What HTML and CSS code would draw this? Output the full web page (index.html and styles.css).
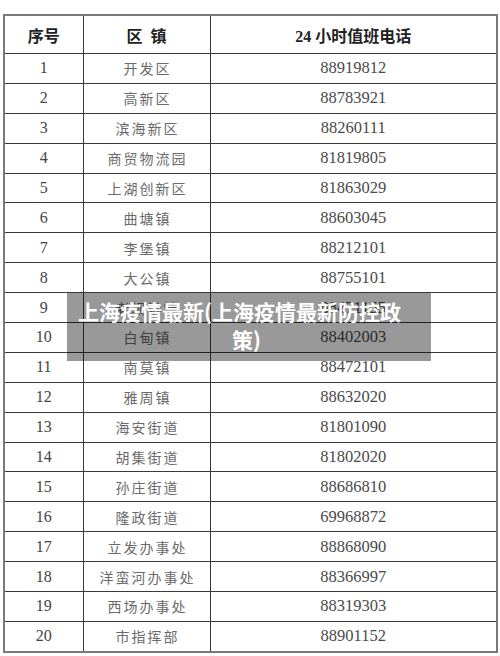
FILE: index.html
```html
<!DOCTYPE html>
<html lang="zh-CN">
<head>
<meta charset="utf-8">
<title>上海疫情最新</title>
<link rel="stylesheet" href="styles.css">
</head>
<body>
<div class="page">
  <table class="duty">
    <colgroup>
      <col class="c-no"><col class="c-area"><col class="c-tel">
    </colgroup>
    <thead>
      <tr><th>序号</th><th>区&nbsp;&nbsp;镇</th><th>24 小时值班电话</th></tr>
    </thead>
    <tbody>
      <tr><td class="no">1</td><td class="area">开发区</td><td class="tel">88919812</td></tr>
      <tr><td class="no">2</td><td class="area">高新区</td><td class="tel">88783921</td></tr>
      <tr><td class="no">3</td><td class="area">滨海新区</td><td class="tel">88260111</td></tr>
      <tr><td class="no">4</td><td class="area">商贸物流园</td><td class="tel">81819805</td></tr>
      <tr><td class="no">5</td><td class="area">上湖创新区</td><td class="tel">81863029</td></tr>
      <tr><td class="no">6</td><td class="area">曲塘镇</td><td class="tel">88603045</td></tr>
      <tr><td class="no">7</td><td class="area">李堡镇</td><td class="tel">88212101</td></tr>
      <tr><td class="no">8</td><td class="area">大公镇</td><td class="tel">88755101</td></tr>
      <tr><td class="no">9</td><td class="area">老坝港镇</td><td class="tel">88471155</td></tr>
      <tr><td class="no">10</td><td class="area">白甸镇</td><td class="tel">88402003</td></tr>
      <tr><td class="no">11</td><td class="area">南莫镇</td><td class="tel">88472101</td></tr>
      <tr><td class="no">12</td><td class="area">雅周镇</td><td class="tel">88632020</td></tr>
      <tr><td class="no">13</td><td class="area">海安街道</td><td class="tel">81801090</td></tr>
      <tr><td class="no">14</td><td class="area">胡集街道</td><td class="tel">81802020</td></tr>
      <tr><td class="no">15</td><td class="area">孙庄街道</td><td class="tel">88686810</td></tr>
      <tr><td class="no">16</td><td class="area">隆政街道</td><td class="tel">69968872</td></tr>
      <tr><td class="no">17</td><td class="area">立发办事处</td><td class="tel">88868090</td></tr>
      <tr><td class="no">18</td><td class="area">洋蛮河办事处</td><td class="tel">88366997</td></tr>
      <tr><td class="no">19</td><td class="area">西场办事处</td><td class="tel">88319303</td></tr>
      <tr><td class="no">20</td><td class="area">市指挥部</td><td class="tel">88901152</td></tr>
    </tbody>
  </table>
  <div class="caption">
    <span class="line1">上海疫情最新(上海疫情最新防控政</span>
    <span class="line2">策)</span>
  </div>
</div>
</body>
</html>
```

FILE: styles.css
```css
html, body {
  margin: 0;
  padding: 0;
  background: #ffffff;
}

.page {
  position: relative;
  width: 500px;
  height: 656px;
  padding-top: 14px;
  box-sizing: border-box;
}

.duty {
  margin-left: 3px;
  width: 493px;
  border-collapse: collapse;
  table-layout: fixed;
  border: 2px solid #7a7a7a;
  font-family: "Liberation Serif", "Noto Sans CJK SC", serif;
}

.c-no { width: 79px; }
.c-area { width: 127px; }
.c-tel { width: 287px; }

.duty th,
.duty td {
  border: 1px solid #3a3a3a;
  text-align: center;
  vertical-align: middle;
  padding: 0;
}

.duty th {
  height: 37px;
  font-size: 16px;
  font-weight: bold;
  color: #222222;
  font-family: "Liberation Serif", "Noto Sans CJK SC", serif;
}

.duty td {
  height: 28.9px;
}

.no {
  font-size: 16px;
  color: #444444;
}

.area {
  font-family: "Noto Sans CJK SC", sans-serif;
  font-size: 14px;
  letter-spacing: 2px;
  color: #6a6a6a;
  text-indent: 2px;
}

.tel {
  font-size: 16.5px;
  color: #4a4a4a;
}

.caption {
  position: absolute;
  left: 67px;
  top: 293px;
  width: 364px;
  height: 68px;
  box-sizing: border-box;
  padding: 4px 0 0 11px;
  background: rgba(0, 0, 0, 0.4);
  color: #ffffff;
  font-family: "Noto Sans CJK SC", sans-serif;
  font-weight: bold;
  font-size: 21px;
  line-height: 28px;
}

.line1 {
  display: block;
  white-space: nowrap;
}

.line2 {
  display: block;
  text-align: center;
  padding-right: 16px;
}
```
